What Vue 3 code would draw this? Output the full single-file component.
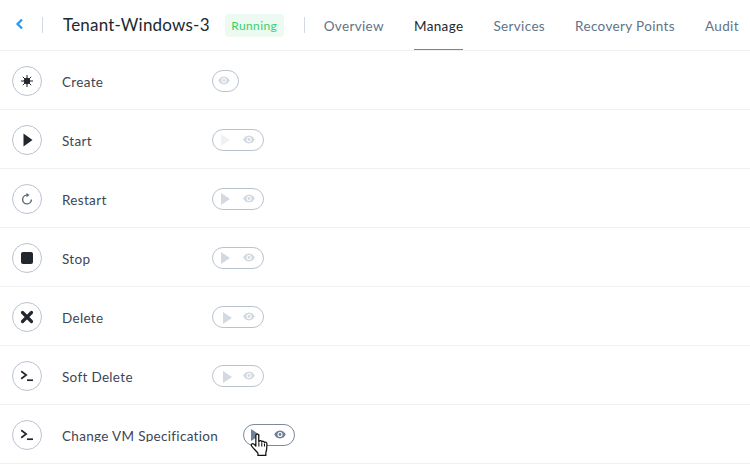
<script setup>
const rows = [
  { key: 'create', label: 'Create', icon: 'create', run: null },
  { key: 'start', label: 'Start', icon: 'start', run: 'faint' },
  { key: 'restart', label: 'Restart', icon: 'restart', run: 'dim' },
  { key: 'stop', label: 'Stop', icon: 'stop', run: 'dim' },
  { key: 'delete', label: 'Delete', icon: 'delete', run: 'low' },
  { key: 'soft', label: 'Soft Delete', icon: 'term', run: 'low' },
  { key: 'change', label: 'Change VM Specification', icon: 'term', run: 'hover' },
]
const tabs = ['Overview', 'Manage', 'Services', 'Recovery Points', 'Audit']
</script>

<template>
  <div class="page">
    <header class="header">
      <svg class="back" width="9" height="12" viewBox="0 0 9 12"><path d="M7 1.500 2.600 6 7 10.500" fill="none" stroke="#2b9af3" stroke-width="2.400"/></svg>
      <span class="sep sep-a"></span>
      <h1 class="title">Tenant-Windows-3</h1>
      <span class="badge">Running</span>
      <span class="sep sep-b"></span>
      <nav class="tabs">
        <a v-for="t in tabs" :key="t" class="tab" :class="{ active: t === 'Manage' }">{{ t }}</a>
      </nav>
    </header>
    <section v-for="r in rows" :key="r.key" class="row" :class="'row-' + r.key">
      <span class="circle">
        <svg width="16" height="16" viewBox="0 0 16 16">
          <g v-if="r.icon === 'create'" fill="#22272e" stroke="#22272e">
            <circle cx="8" cy="8" r="3.200" stroke="none"/>
            <path d="M8 2v12M2 8h12M3.800 3.800l8.400 8.400M12.200 3.800l-8.400 8.400" stroke-width="1" />
          </g>
          <path v-else-if="r.icon === 'start'" d="M4.500 1.500 13.500 8l-9 6.500z" fill="#22272e"/>
          <g v-else-if="r.icon === 'restart'" fill="none" stroke="#5a6778" stroke-width="1.400">
            <path d="M12.400 8.500A4.400 4.400 0 1 1 7.600 4.100"/>
            <path d="M7.400 1.900v4.400l3.200-2.200z" fill="#5a6778" stroke="none"/>
          </g>
          <rect v-else-if="r.icon === 'stop'" x="2" y="2" width="12" height="12" rx="2" fill="#22272e"/>
          <path v-else-if="r.icon === 'delete'" d="M3.500 3.500l9 9M12.500 3.500l-9 9" stroke="#22272e" stroke-width="3.200" stroke-linecap="round"/>
          <g v-else fill="none" stroke="#22272e" stroke-width="1.700">
            <path d="M2.200 3.200 7.200 7l-5 3.800"/>
            <path d="M8 12.200h6"/>
          </g>
        </svg>
      </span>
      <span class="label">{{ r.label }}</span>
      <span class="pill" :class="r.run ? 'pill-' + r.run : 'pill-one'">
        <svg v-if="r.run" class="run" width="9" height="12" viewBox="0 0 9 12"><path d="M0 0 9 6 0 12z"/></svg>
        <svg class="eye" width="12" height="9" viewBox="0 0 12 9">
          <path fill-rule="evenodd" d="M6 .5C9 .5 11 2.800 11.800 4.500 11 6.200 9 8.500 6 8.500S1 6.200.2 4.500C1 2.800 3 .5 6 .5zM6 2a2.500 2.500 0 1 0 0 5 2.500 2.500 0 0 0 0-5z"/>
          <circle cx="6" cy="4.500" r="1.400"/>
        </svg>
        <svg v-if="r.run === 'hover'" class="hand" width="20" height="25" viewBox="0 0 19 24">
          <path d="M5.500 2.500c0-2 2.800-2 2.800 0v6l.4-.5c.5-1 2.200-.8 2.500.4.700-.8 2.200-.6 2.500.6.900-.6 2.300 0 2.400 1.200.1 3 .1 6-1 8.800v2.500H7.500v-2.200C5.500 17 3.500 15 1.500 12.500c-1.100-1.600.8-3.200 2.200-1.800l1.800 1.800z" fill="#fff" stroke="#111" stroke-width="1.200" stroke-linejoin="round"/>
          <path d="M8.400 9v4M11.200 9v4M13.800 10v3" stroke="#111" fill="none"/>
        </svg>
      </span>
    </section>
  </div>
</template>

<style>
body { background: #fff; }
</style>

<style scoped>
.page {
  width: 750px;
  height: 464px;
  overflow: hidden;
  background: #fff;
  font-family: Lato, "Open Sans", sans-serif;
}
.header {
  height: 50px;
  display: flex;
  align-items: center;
  border-bottom: 1px solid #f0f1f3;
  white-space: nowrap;
}
.back { margin-left: 15px; margin-top: -2px; }
.sep { width: 1px; height: 16px; background: #d3d9e0; margin-top: -1px; }
.sep-a { margin-left: 18px; }
.title {
  margin: -1px 0 0 20px;
  font-size: 17px;
  font-weight: 400;
  letter-spacing: 0.21px;
  color: #22272e;
}
.badge {
  margin-left: 15px;
  height: 23px;
  width: 59px;
  line-height: 24px;
  text-align: center;
  background: #ecfaf1;
  color: #36d068;
  border-radius: 4px;
  font-size: 12px;
  letter-spacing: 0.4px;
}
.sep-b { margin-left: 20px; }
.tabs { display: flex; height: 50px; margin-left: 19px; gap: 30px; }
.tab {
  display: block;
  height: 50px;
  line-height: 53px;
  box-sizing: border-box;
  font-size: 13.500px;
  letter-spacing: 0.35px;
  color: #627386;
}
.tab.active { color: #22272e; border-bottom: 1px solid #2b9af3; }
.row {
  height: 59px;
  box-sizing: border-box;
  display: flex;
  align-items: center;
  border-bottom: 1px solid #f0f1f3;
  padding: 2px 0 0 12px;
}
.circle {
  width: 30px;
  height: 30px;
  box-sizing: border-box;
  border: 1px solid #b9c3d0;
  border-radius: 50%;
  display: flex;
  align-items: center;
  justify-content: center;
  flex: none;
}
.label {
  margin-left: 20px;
  margin-top: 1px;
  width: 150px;
  line-height: 16px;
  white-space: nowrap;
  font-size: 13.500px;
  letter-spacing: 0.32px;
  color: #3b4656;
}
.row-change .label {
  width: 181px;
  height: 14px;
  overflow: hidden;
  margin-top: -1px;
}
.pill {
  position: relative;
  box-sizing: border-box;
  width: 52px;
  height: 22px;
  border: 1px solid #b9c3d0;
  border-radius: 11px;
  display: flex;
  align-items: center;
  justify-content: space-between;
  padding: 0 8px 0 8px;
}
.pill-one { width: 27px; justify-content: center; padding: 0 3px 0 0; }
.run { fill: #d3d9e0; }
.pill-faint .run { fill: #eff2f5; }
.pill-low { padding-left: 10px; }
.pill-low .run { margin-top: 2px; }
.eye { fill: #d3d9e0; margin-top: -2px; }
.pill-hover { border-color: #7c8a9c; padding-left: 7px; }
.pill-hover .run { fill: #6f8196; }
.pill-hover .eye { fill: #6f8196; }
.hand { position: absolute; left: 6px; top: 8px; }
</style>
